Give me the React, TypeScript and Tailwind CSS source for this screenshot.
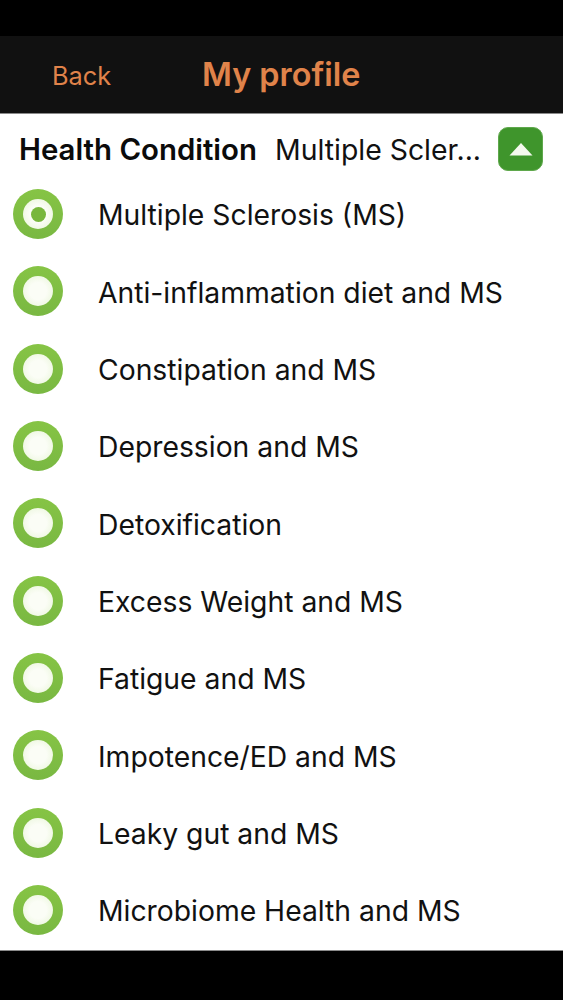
const conditions = [
  "Multiple Sclerosis (MS)",
  "Anti-inflammation diet and MS",
  "Constipation and MS",
  "Depression and MS",
  "Detoxification",
  "Excess Weight and MS",
  "Fatigue and MS",
  "Impotence/ED and MS",
  "Leaky gut and MS",
  "Microbiome Health and MS",
];

function Radio({ selected }: { selected: boolean }) {
  return (
    <div className="mb-[3px] flex h-[50px] w-[50px] shrink-0 items-center justify-center rounded-full bg-[linear-gradient(to_bottom,#86c445,#79b842)]">
      <div className="flex h-[30px] w-[30px] items-center justify-center rounded-full bg-[radial-gradient(circle,#fbfdf6_40%,#e6f4d4_100%)]">
        {selected && <div className="h-[15px] w-[15px] rounded-full bg-[#78b73c]" />}
      </div>
    </div>
  );
}

export default function App() {
  return (
    <div className="flex h-[1000px] w-[563px] flex-col overflow-hidden bg-black font-['Inter',sans-serif]">
      <div className="h-9 shrink-0 bg-black" />

      <header className="flex h-[78px] shrink-0 items-center border-b border-[#8a8a8a] bg-[#111111] pt-[2px] text-[#e0834a]">
        <span className="ml-[52px] w-[150px] text-[25.3px]">Back</span>
        <h1 className="text-[32.4px] font-semibold">My profile</h1>
      </header>

      <main className="flex h-[836px] shrink-0 flex-col bg-white text-[#111111]">
        <div className="flex h-[63px] shrink-0 items-center pl-[19px] pt-[9px]">
          <span className="w-[256px] text-[29.4px] font-semibold text-[#0b0b0b]">Health Condition</span>
          <span className="w-[223px] text-[28.4px]">Multiple Scler...</span>
          <button
            type="button"
            className="mb-[2px] flex h-[44px] w-[45px] items-center justify-center rounded-[10px] border border-[#5fa84c] bg-[#3f952c]"
          >
            <svg width="24" height="14" viewBox="0 0 24 14">
              <path d="M12 1 L23.5 13.5 L0.5 13.5 Z" fill="#f4f9ee" />
            </svg>
          </button>
        </div>

        <ul className="flex flex-col">
          {conditions.map((name, i) => (
            <li key={name} className="flex h-[77.3px] items-center pl-[13px]">
              <Radio selected={i === 0} />
              <span className="ml-[35px] text-[28.3px]">{name}</span>
            </li>
          ))}
        </ul>
      </main>

      <div className="flex-1 border-t border-[#8a8a8a] bg-black" />
    </div>
  );
}
